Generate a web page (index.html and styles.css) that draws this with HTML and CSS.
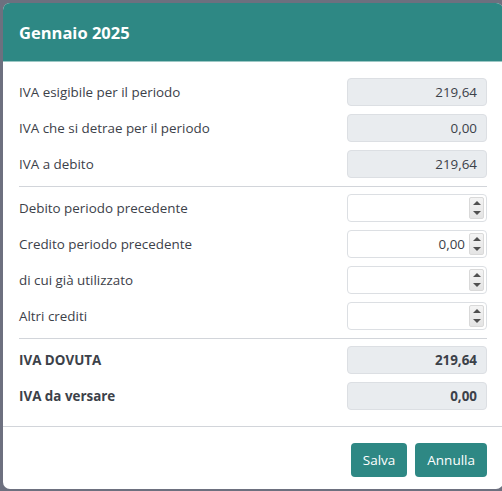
FILE: index.html
```html
<!DOCTYPE html>
<html lang="it">
<head>
<meta charset="utf-8">
<link rel="stylesheet" href="styles.css">
</head>
<body>
<div class="modal">
  <div class="modal-header"><h1 class="title">Gennaio 2025</h1></div>
  <div class="modal-body">
    <div class="row"><span class="label">IVA esigibile per il periodo</span><div class="field ro">219,64</div></div>
    <div class="row"><span class="label">IVA che si detrae per il periodo</span><div class="field ro">0,00</div></div>
    <div class="row"><span class="label">IVA a debito</span><div class="field ro">219,64</div></div>
    <hr class="sep">
    <div class="row"><span class="label">Debito periodo precedente</span><div class="field num"><span class="val"></span><span class="spin"><i class="up"></i><i class="down"></i></span></div></div>
    <div class="row"><span class="label">Credito periodo precedente</span><div class="field num"><span class="val">0,00</span><span class="spin"><i class="up"></i><i class="down"></i></span></div></div>
    <div class="row"><span class="label">di cui già utilizzato</span><div class="field num"><span class="val"></span><span class="spin"><i class="up"></i><i class="down"></i></span></div></div>
    <div class="row"><span class="label">Altri crediti</span><div class="field num"><span class="val"></span><span class="spin"><i class="up"></i><i class="down"></i></span></div></div>
    <hr class="sep">
    <div class="row strong"><span class="label">IVA DOVUTA</span><div class="field ro">219,64</div></div>
    <div class="row strong"><span class="label">IVA da versare</span><div class="field ro">0,00</div></div>
  </div>
  <div class="modal-footer">
    <button class="btn">Salva</button>
    <button class="btn">Annulla</button>
  </div>
</div>
</body>
</html>
```

FILE: styles.css
```css
html, body {
  margin: 0;
  padding: 0;
  height: 100%;
  overflow: hidden;
}
body {
  background: #6d707f;
  font-family: "Open Sans", "Noto Sans", sans-serif;
  color: #3c4149;
}
.modal {
  margin: 3px 0 0 3px;
  width: 500px;
  height: 486px;
  background: #fff;
  border-radius: 7px;
  overflow: hidden;
  display: flex;
  flex-direction: column;
}
.modal-header {
  background: #2e8884;
  height: 59px;
  display: flex;
  align-items: center;
  padding: 0 16px;
  border-bottom: 1px solid #9cc7c4;
  box-sizing: border-box;
}
.title {
  margin: 0;
  color: #fff;
  font-size: 16.5px;
  font-weight: 700;
  padding-top: 1px;
}
.modal-body {
  padding: 16px 16px 16px 16px;
  border-bottom: 1px solid #d2d5da;
}
.row {
  display: flex;
  align-items: center;
  justify-content: space-between;
  height: 28px;
  margin-bottom: 8px;
}
.row:last-child { margin-bottom: 0; }
.label {
  font-size: 13.4px;
}
.field {
  width: 140px;
  height: 28px;
  box-sizing: border-box;
  border: 1px solid #dcdfe3;
  border-radius: 4px;
  font-size: 13.4px;
  display: flex;
  align-items: center;
  justify-content: flex-end;
  padding: 0 9px;
}
.ro {
  background: #e9ecef;
}
.num {
  background: #fff;
  padding: 0 2px 0 9px;
}
.num .val {
  flex: 1;
  text-align: right;
  padding-right: 4px;
}
.spin {
  width: 15px;
  height: 22px;
  display: flex;
  flex-direction: column;
  border: 1px solid #d9d9d9;
  border-radius: 2px;
  background: linear-gradient(#f4f4f4, #e4e4e4);
  box-sizing: border-box;
}
.spin i {
  flex: 1;
  display: flex;
  align-items: center;
  justify-content: center;
}
.spin .up::before {
  content: "";
  border-left: 4px solid transparent;
  border-right: 4px solid transparent;
  border-bottom: 4px solid #505050;
}
.spin .down::before {
  content: "";
  border-left: 4px solid transparent;
  border-right: 4px solid transparent;
  border-top: 4px solid #505050;
}
.sep {
  border: 0;
  border-top: 1px solid #d2d5da;
  margin: 7px 0;
}
.strong .label, .strong .field {
  font-weight: 700;
}
.modal-footer {
  display: flex;
  justify-content: flex-end;
  gap: 8px;
  padding: 16px 16px 0 16px;
}
.btn {
  background: #2e8884;
  color: #fff;
  border: 0;
  border-radius: 4px;
  height: 34px;
  padding: 0 12px;
  font-family: inherit;
  font-size: 13.5px;
}
```
